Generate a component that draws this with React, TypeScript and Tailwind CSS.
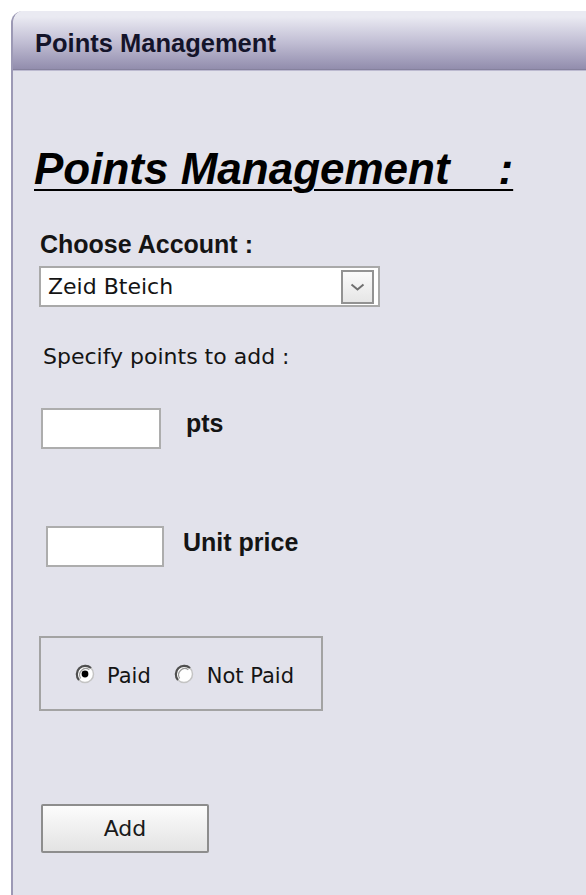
import React from "react";

function RadioDot({ checked }: { checked: boolean }) {
  return (
    <svg width="20" height="20" viewBox="0 0 20 20" className="shrink-0">
      <circle cx="10" cy="10" r="8.5" fill="#ffffff" stroke="#c4c4c4" strokeWidth="1.5" />
      {/* shadowed upper-left rim */}
      <path d="M16 4 A8.5 8.5 0 0 0 4 16" fill="none" stroke="#4f4f4f" strokeWidth="2.2" />
      <path d="M14.3 5.7 A6.2 6.2 0 0 0 5.7 14.3" fill="none" stroke="#9a9a9a" strokeWidth="1.2" />
      {checked && <circle cx="10" cy="10" r="3.4" fill="#000000" />}
    </svg>
  );
}

export default function App() {
  return (
    <div className="h-[895px] overflow-hidden bg-white pt-[11px] pl-[11px] flex flex-col">
      <div className="flex-1 flex flex-col rounded-tl-[12px] border-l-2 border-[#9c99b5] overflow-hidden">
        {/* title bar */}
        <div className="h-[59px] shrink-0 border-b border-[#85819d] bg-linear-to-b from-[#eaeaf2] from-10% via-[#c0bdd3] via-55% to-[#928dad] flex items-center pl-[22px] pt-[6px]">
          <span className="font-['Liberation_Sans',Arial,sans-serif] font-bold text-[25.5px] leading-[30px] text-[#14142a]">
            Points Management
          </span>
        </div>

        {/* panel body */}
        <div className="flex-1 bg-[#e2e2eb] border-t border-[#bcbad0] pl-[26px] flex flex-col items-start text-[#141414]">
          <h1 className="mt-[73px] ml-[-5px] h-[50px] font-['Liberation_Sans',Arial,sans-serif] font-bold italic text-[44px] leading-[50px] whitespace-pre underline decoration-2 underline-offset-[5px] text-black">
            {"Points Management    :"}
          </h1>

          <div className="mt-[35px] ml-[1px] font-['Liberation_Sans',Arial,sans-serif] font-bold text-[25px] leading-[30px]">
            Choose Account :
          </div>

          <div className="mt-[7px] w-[341px] h-[41px] border-2 border-[#a9a9a9] bg-white flex items-center">
            <span className="pl-[7px] font-['DejaVu_Sans',sans-serif] text-[22px] leading-[26px]">Zeid Bteich</span>
            <div className="ml-auto mr-[4px] w-[33px] h-[34px] border-2 border-[#929292] bg-linear-to-b from-[#fafafa] to-[#e6e6e6] flex items-center justify-center">
              <svg width="15" height="8" viewBox="0 0 15 8">
                <path d="M1.5 1.5 L7.5 6.5 L13.5 1.5" fill="none" stroke="#6f6f6f" strokeWidth="2" />
              </svg>
            </div>
          </div>

          <div className="mt-[37px] ml-[4px] font-['DejaVu_Sans',sans-serif] text-[22px] leading-[26px]">
            Specify points to add :
          </div>

          <div className="mt-[38px] flex items-start">
            <div className="ml-[2px] w-[120px] h-[41px] border-2 border-[#adadad] bg-white" />
            <span className="ml-[25px] font-['Liberation_Sans',Arial,sans-serif] font-bold text-[25px] leading-[30px]">pts</span>
          </div>

          <div className="mt-[77px] flex items-start">
            <div className="ml-[7px] w-[118px] h-[41px] border-2 border-[#adadad] bg-white" />
            <span className="ml-[19px] pt-[1px] font-['Liberation_Sans',Arial,sans-serif] font-bold text-[25px] leading-[30px]">
              Unit price
            </span>
          </div>

          <div className="mt-[69px] w-[284px] h-[75px] border-2 border-[#a3a3a3] flex items-center pl-[34px] font-['DejaVu_Sans',sans-serif] text-[21px] leading-[26px]">
            <RadioDot checked />
            <span className="ml-[12px] mt-[4px]">Paid</span>
            <span className="ml-[23px]">
              <RadioDot checked={false} />
            </span>
            <span className="ml-[13px] mt-[4px]">Not Paid</span>
          </div>

          <button className="mt-[93px] ml-[2px] w-[168px] h-[49px] border-2 border-[#8d8d8d] rounded-[2px] bg-linear-to-b from-[#fcfcfc] to-[#e3e3e3] flex items-center justify-center font-['DejaVu_Sans',sans-serif] text-[22px] leading-[26px] text-[#1a1a1a]">
            Add
          </button>
        </div>
      </div>
    </div>
  );
}
